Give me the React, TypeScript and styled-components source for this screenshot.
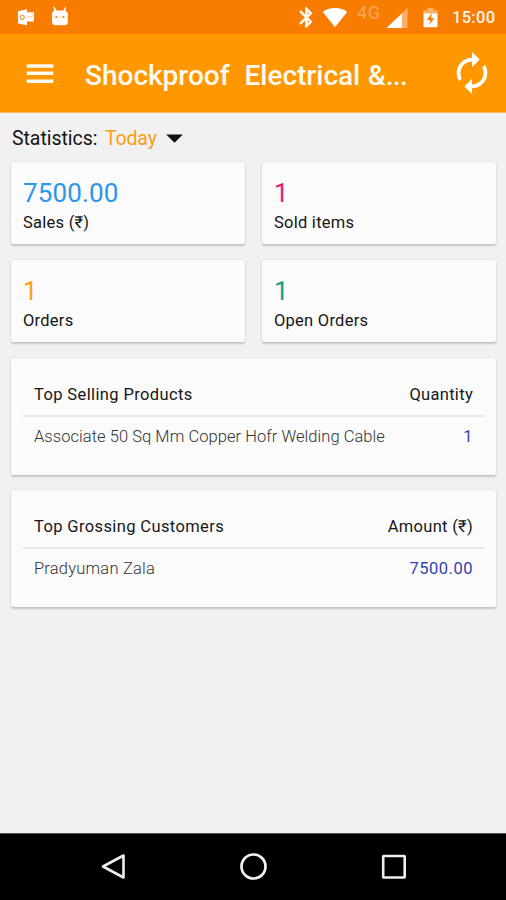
import React from "react";
import styled, { createGlobalStyle } from "styled-components";

const GlobalStyle = createGlobalStyle`
  * { box-sizing: border-box; }
  body { margin: 0; background: #f1f1f1; }
`;

const Screen = styled.div`
  width: 506px;
  height: 900px;
  display: flex;
  flex-direction: column;
  overflow: hidden;
  background: #f1f1f1;
  color: #151515;
  font-family: Roboto, "Noto Sans", sans-serif;
`;

const StatusBar = styled.div`
  height: 34px;
  flex: none;
  display: flex;
  align-items: flex-start;
  justify-content: space-between;
  padding: 0 11px 0 17px;
  background: #f77c00;
  color: #fff;
`;

const StatusGroup = styled.div`
  display: flex;
  align-items: flex-start;
`;

const StatusIcon = styled.svg<{ $top: number; $left?: number }>`
  display: block;
  flex: none;
  margin-top: ${(p) => p.$top}px;
  margin-left: ${(p) => p.$left ?? 0}px;
`;

const Network = styled.span`
  width: 25px;
  margin: 4px 0 0 9px;
  font-size: 18px;
  line-height: 18px;
  font-weight: 500;
  letter-spacing: 0.6px;
  color: #faa04d;
`;

const Clock = styled.span`
  width: 43px;
  margin: 8px 0 0 14px;
  font-size: 16.5px;
  line-height: 20px;
  font-weight: 500;
  letter-spacing: 0.3px;
  color: #fff3e6;
`;

const AppBar = styled.header`
  height: 79px;
  flex: none;
  display: flex;
  align-items: center;
  padding: 0 11px 0 26px;
  background: #ff9800;
  border-bottom: 1px solid #ffb84f;
`;

const MenuButton = styled.button`
  width: 28px;
  height: 22px;
  margin-top: 1px;
  padding: 0;
  border: 0;
  background: none;
`;

const Title = styled.h1`
  flex: 1;
  margin: 5px 0 0 31px;
  font-size: 28px;
  line-height: 34px;
  font-weight: 500;
  white-space: pre;
  word-spacing: 0.5px;
  color: #fffaf2;
`;

const Ellipsis = styled.span`
  letter-spacing: -0.6px;
`;

const RefreshButton = styled.button`
  width: 46px;
  height: 46px;
  padding: 0;
  border: 0;
  background: none;
`;

const Icon = styled.svg`
  display: block;
`;

const Content = styled.main`
  flex: 1;
  padding: 13px 10px 0 11px;
  display: flex;
  flex-direction: column;
`;

const Filter = styled.div`
  height: 26px;
  margin-bottom: 10px;
  padding-left: 1px;
  display: flex;
  align-items: center;
  font-size: 19.5px;
  line-height: 26px;
`;

const FilterLabel = styled.span`
  width: 93px;
  letter-spacing: -0.05px;
`;

const FilterValue = styled.span`
  width: 61px;
  letter-spacing: -0.15px;
  color: #ff9b12;
`;

const Caret = styled(Icon)`
  margin-top: -2px;
`;

const Stats = styled.section`
  display: grid;
  grid-template-columns: 234px 234px;
  grid-auto-rows: 82px;
  justify-content: space-between;
  row-gap: 16px;
`;

const Card = styled.div`
  background: #fbfbfb;
  border-radius: 2px;
  box-shadow: 0 2px 2px rgba(0, 0, 0, 0.17), 0 0 2px rgba(0, 0, 0, 0.13);
`;

const StatCard = styled(Card)`
  padding: 14px 12px 0;
`;

const StatValue = styled.div<{ $color: string }>`
  font-size: 26px;
  line-height: 34px;
  letter-spacing: 0.15px;
  color: ${(p) => p.$color};
`;

const StatLabel = styled.div`
  font-size: 16.5px;
  line-height: 25px;
  letter-spacing: 0.25px;
`;

const TableCard = styled(Card)`
  height: 117px;
  margin-top: 16px;
  padding: 13px 12px 12px;

  & + & {
    margin-top: 15px;
  }
`;

const Row = styled.div<{ $head?: boolean }>`
  display: flex;
  justify-content: space-between;
  align-items: center;
  height: ${(p) => (p.$head ? 46 : 38)}px;
  padding: ${(p) => (p.$head ? "2px 11px 0" : "0 11px")};
  border-bottom: ${(p) => (p.$head ? "2px solid #e8e8e8" : "0")};
  font-size: 16.5px;
`;

const Cell = styled.span<{ $tone: "head" | "body" | "number"; $spacing: number }>`
  letter-spacing: ${(p) => p.$spacing}px;
  font-weight: ${(p) => (p.$tone === "body" ? 300 : 400)};
  color: ${(p) => ({ head: "#171717", body: "#333", number: "#3044b0" })[p.$tone]};
`;

const NavBar = styled.nav`
  height: 67px;
  flex: none;
  display: flex;
  justify-content: space-between;
  align-items: center;
  padding: 0 98px 0 100px;
  background: #000;
  border-top: 1px solid #555;
`;

const stats = [
  { value: "7500.00", label: "Sales (₹)", color: "#2b97ea" },
  { value: "1", label: "Sold items", color: "#e91e70" },
  { value: "1", label: "Orders", color: "#ffa011" },
  { value: "1", label: "Open Orders", color: "#16a085" },
];

const tables = [
  {
    title: "Top Selling Products",
    unit: "Quantity",
    name: "Associate 50 Sq Mm Copper Hofr Welding Cable",
    amount: "1",
    spacing: 0.05,
  },
  {
    title: "Top Grossing Customers",
    unit: "Amount (₹)",
    name: "Pradyuman Zala",
    amount: "7500.00",
    spacing: 0.2,
  },
];

export default function App() {
  return (
    <Screen>
      <GlobalStyle />
      <StatusBar>
        <StatusGroup>
          <StatusIcon $top={9} width="18" height="17" viewBox="0 0 18 17">
            <path fill="#fff" d="M1 2.2 10 .3v2.9h7v9.3h-7v3.7L1 14.4Z" />
            <ellipse cx="5.2" cy="8.2" rx="2" ry="2.2" fill="none" stroke="#f99a45" strokeWidth="1.2" />
            <path d="m10.500 7 2 1.500L16 6.500" fill="none" stroke="#fbb884" strokeWidth="1" />
          </StatusIcon>
          <StatusIcon $top={6} $left={16} width="18" height="20" viewBox="0 0 18 20">
            <path
              fill="#fffaf5"
              d="M3.2.6 5.6 4.4h6.8L14.4.6l.9.4-1 3.8c1.6.5 2.5 1.7 2.5 3.4v7.7c0 2.3-1.2 3.3-3.4 3.3H4.4C2.2 19.200 1 18.200 1 15.900V8.200c0-1.800.7-2.900 2.200-3.400L2.300 1Z"
            />
            <circle cx="5.300" cy="11" r="1.100" fill="#f77c00" />
            <circle cx="12.500" cy="11" r="1.100" fill="#f77c00" />
            <path d="m8.200 10.700.7.7.7-.7" stroke="#f9a85a" strokeWidth=".7" fill="none" />
          </StatusIcon>
        </StatusGroup>
        <StatusGroup>
          <StatusIcon $top={7} width="14" height="22" viewBox="4.500 1.500 14 22" fill="#fff">
            <path
              stroke="#fff"
              strokeWidth=".5"
              d="M17.71 7.71 12 2h-1v7.59L6.41 5 5 6.41 10.59 12 5 17.59 6.41 19 11 14.41V22h1l5.71-5.71-4.3-4.29zM13 5.83l1.880 1.880L13 9.590zM14.880 16.290 13 18.170v-3.760z"
            />
          </StatusIcon>
          <StatusIcon $top={7} $left={9} width="26" height="21" viewBox="0 0 26 21">
            <path fill="#fff" d="M13 20.300.8 5C3.800 2.400 8 .9 13 .9s9.200 1.500 12.200 4.100Z" />
          </StatusIcon>
          <Network>4G</Network>
          <StatusIcon $top={8} $left={4} width="22" height="20" viewBox="0 0 22 20">
            <path fill="#fab066" d="M21.500 0v20H.5Z" />
            <path fill="#fff" d="M16 5.500V20H.5Z" />
          </StatusIcon>
          <StatusIcon $top={7} $left={15} width="15" height="21" viewBox="0 0 15 21">
            <path fill="#fab066" d="M.5 7V3.200h4V.8h6v2.400h4V7Z" />
            <path fill="#fff" d="M.5 6.500h14v12.700q0 1-1 1h-12q-1 0-1-1Z" />
            <path fill="#f77c00" d="m9 6-5.200 6.700 3.600.6L6 17.600l5.300-6.200-3.400-.7Z" />
          </StatusIcon>
          <Clock>15:00</Clock>
        </StatusGroup>
      </StatusBar>
      <AppBar>
        <MenuButton aria-label="Menu">
          <Icon width="28" height="22" viewBox="0 0 28 22" fill="#fffaf2">
            <path d="M.7 1.200h26.600v3.500H.7zM.7 8.600h26.600v3.500H.7zM.7 16.500h26.600V20H.7z" />
          </Icon>
        </MenuButton>
        <Title>
          {"Shockproof  Electrical &"}
          <Ellipsis>...</Ellipsis>
        </Title>
        <RefreshButton aria-label="Refresh">
          <Icon width="46" height="46" viewBox="0 0 24 24" fill="#fff">
            <path d="M12 6v3l4-4-4-4v3c-4.42 0-8 3.58-8 8 0 1.57.46 3.03 1.24 4.26L6.7 14.8c-.45-.83-.7-1.79-.7-2.8 0-3.31 2.69-6 6-6zm6.76 1.74L17.3 9.2c.44.84.7 1.79.7 2.8 0 3.31-2.69 6-6 6v-3l-4 4 4 4v-3c4.42 0 8-3.58 8-8 0-1.57-.46-3.03-1.24-4.26z" />
          </Icon>
        </RefreshButton>
      </AppBar>
      <Content>
        <Filter>
          <FilterLabel>Statistics:</FilterLabel>
          <FilterValue>Today</FilterValue>
          <Caret width="17" height="9" viewBox="0 0 17 9">
            <path d="M.2.5h16.600L8.500 8.700Z" fill="#111" />
          </Caret>
        </Filter>
        <Stats>
          {stats.map((s) => (
            <StatCard key={s.label}>
              <StatValue $color={s.color}>{s.value}</StatValue>
              <StatLabel>{s.label}</StatLabel>
            </StatCard>
          ))}
        </Stats>
        {tables.map((t) => (
          <TableCard key={t.title}>
            <Row $head>
              <Cell $tone="head" $spacing={0.38}>{t.title}</Cell>
              <Cell $tone="head" $spacing={0.3}>{t.unit}</Cell>
            </Row>
            <Row>
              <Cell $tone="body" $spacing={t.spacing}>{t.name}</Cell>
              <Cell $tone="number" $spacing={0.5}>{t.amount}</Cell>
            </Row>
          </TableCard>
        ))}
      </Content>
      <NavBar>
        <Icon width="27" height="30" viewBox="0 0 27 30">
          <path d="M23.500 3.500v22L3 14.500Z" fill="none" stroke="#eee" strokeWidth="2.600" strokeLinejoin="round" />
        </Icon>
        <Icon width="30" height="30" viewBox="0 0 30 30">
          <circle cx="14.500" cy="14.500" r="12" fill="none" stroke="#f2f2f2" strokeWidth="2.700" />
        </Icon>
        <Icon width="28" height="30" viewBox="0 0 28 30">
          <rect x="3.200" y="4" width="21.500" height="21.500" rx=".5" fill="none" stroke="#eee" strokeWidth="2.600" />
        </Icon>
      </NavBar>
    </Screen>
  );
}
